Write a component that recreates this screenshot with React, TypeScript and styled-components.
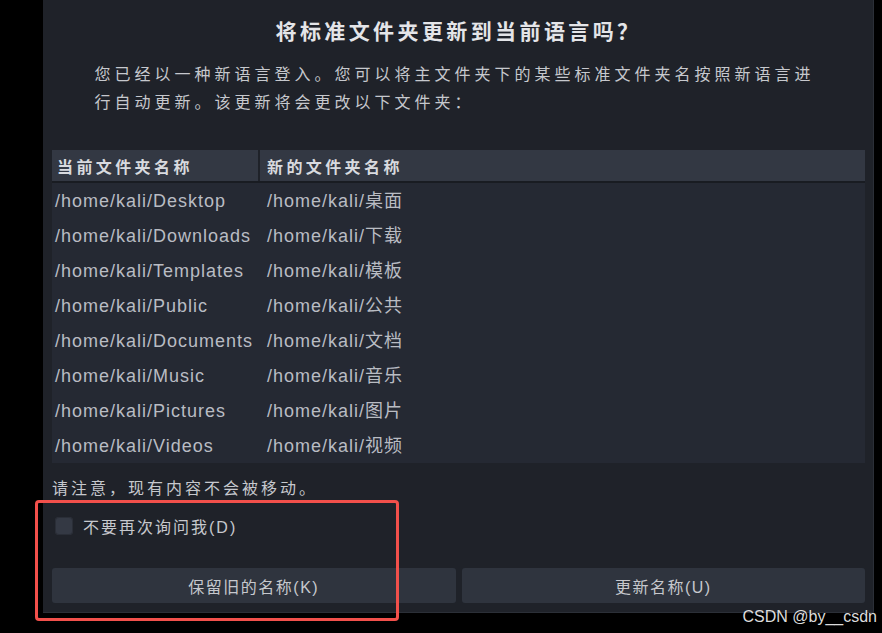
import React from 'react'
import styled, { createGlobalStyle } from 'styled-components'

const GlobalStyle = createGlobalStyle`
  html, body {
    margin: 0;
    padding: 0;
    background: #000;
  }
  body {
    font-family: "Liberation Sans", "Noto Sans CJK SC", sans-serif;
  }
`

const folders = [
  ['/home/kali/Desktop', '/home/kali/桌面'],
  ['/home/kali/Downloads', '/home/kali/下载'],
  ['/home/kali/Templates', '/home/kali/模板'],
  ['/home/kali/Public', '/home/kali/公共'],
  ['/home/kali/Documents', '/home/kali/文档'],
  ['/home/kali/Music', '/home/kali/音乐'],
  ['/home/kali/Pictures', '/home/kali/图片'],
  ['/home/kali/Videos', '/home/kali/视频'],
]

const App = () => {
  return (
    <>
      <GlobalStyle />
      <Screen>
        <Dialog>
          <Title>将标准文件夹更新到当前语言吗？</Title>
          <Intro>
            您已经以一种新语言登入。您可以将主文件夹下的某些标准文件夹名按照新语言进行自动更新。该更新将会更改以下文件夹：
          </Intro>

          <Table>
            <HeaderRow>
              <HeaderCell $first>当前文件夹名称</HeaderCell>
              <HeaderCell>新的文件夹名称</HeaderCell>
            </HeaderRow>
            <Body>
              {folders.map(([oldName, newName]) => (
                <Row key={oldName}>
                  <Cell $first>{oldName}</Cell>
                  <Cell>{newName}</Cell>
                </Row>
              ))}
            </Body>
          </Table>

          <Note>请注意，现有内容不会被移动。</Note>

          <CheckRow>
            <CheckBox />
            <CheckLabel>不要再次询问我(D)</CheckLabel>
          </CheckRow>

          <Buttons>
            <Button>保留旧的名称(K)</Button>
            <Button>更新名称(U)</Button>
          </Buttons>
        </Dialog>

        {/* red highlight drawn over the screenshot */}
        <Highlight />
        <Watermark>CSDN @by__csdn</Watermark>
      </Screen>
    </>
  )
}

const Screen = styled.div`
  position: relative;
  width: 882px;
  height: 633px;
  background: #000;
  overflow: hidden;
  padding-left: 43px;
  box-sizing: border-box;
`

const Dialog = styled.div`
  width: 831px;
  height: 613px;
  box-sizing: border-box;
  background: #1f2229;
  border-right: 1px solid #2b2f37;
  border-bottom: 1px solid #2b2f37;
  padding: 15px 8px 0 9px;
  display: flex;
  flex-direction: column;
`

const Title = styled.h1`
  margin: 0;
  font-family: "Noto Sans CJK SC", sans-serif;
  font-size: 21px;
  line-height: 30px;
  font-weight: 700;
  letter-spacing: 3.4px;
  text-align: center;
  color: #e4e5e8;
`

const Intro = styled.p`
  margin: 14px auto 0;
  width: 728px;
  font-family: "Noto Sans CJK SC", sans-serif;
  font-size: 16px;
  line-height: 28px;
  letter-spacing: 4px;
  color: #c6c8cd;
`

const Table = styled.div`
  margin-top: 35px;
  display: flex;
  flex-direction: column;
  background: #252933;
`

const HeaderRow = styled.div`
  display: grid;
  grid-template-columns: 208px 1fr;
  height: 31px;
  background: #333843;
  border-bottom: 2px solid #191c22;
`

const HeaderCell = styled.div<{ $first?: boolean }>`
  display: flex;
  align-items: center;
  padding-left: ${(p) => (p.$first ? '5px' : '7px')};
  border-right: ${(p) => (p.$first ? '2px solid #1f2229' : 'none')};
  font-family: "Noto Sans CJK SC", sans-serif;
  font-size: 16px;
  font-weight: 700;
  letter-spacing: 3.4px;
  color: #d8dadf;
`

const Body = styled.div`
  display: flex;
  flex-direction: column;
`

const Row = styled.div`
  display: grid;
  grid-template-columns: 210px 1fr;
  height: 35px;
  align-items: center;
`

const Cell = styled.div<{ $first?: boolean }>`
  padding-left: ${(p) => (p.$first ? '3px' : '5px')};
  font-family: "Liberation Sans", "Noto Sans CJK SC", sans-serif;
  font-size: 18px;
  line-height: 22px;
  letter-spacing: 1px;
  color: #b9bcc3;
  white-space: nowrap;
`

const Note = styled.div`
  margin-top: 13px;
  font-family: "Noto Sans CJK SC", sans-serif;
  font-size: 16px;
  line-height: 22px;
  letter-spacing: 3px;
  color: #c6c8cd;
`

const CheckRow = styled.div`
  margin-top: 16px;
  display: flex;
  align-items: center;
  gap: 10px;
  padding-left: 3px;
`

const CheckBox = styled.span`
  width: 18px;
  height: 18px;
  border-radius: 4px;
  background: #343944;
  box-shadow: inset 0 0 0 1px #2a2e37;
`

const CheckLabel = styled.span`
  font-family: "Liberation Sans", "Noto Sans CJK SC", sans-serif;
  font-size: 16px;
  letter-spacing: 2px;
  color: #c6c8cd;
`

const Buttons = styled.div`
  margin-top: 30px;
  display: grid;
  grid-template-columns: 1fr 1fr;
  gap: 6px;
`

const Button = styled.button`
  height: 35px;
  border: none;
  border-radius: 3px;
  background: #2f343e;
  color: #c6c8cd;
  font-family: "Liberation Sans", "Noto Sans CJK SC", sans-serif;
  font-size: 16px;
  letter-spacing: 1.5px;
  cursor: pointer;
`

const Highlight = styled.div`
  position: absolute;
  left: 35px;
  top: 500px;
  width: 364px;
  height: 121px;
  box-sizing: border-box;
  border: 3px solid #f2504b;
  border-radius: 4px;
  pointer-events: none;
`

const Watermark = styled.div`
  position: absolute;
  right: 5px;
  bottom: 7px;
  font-family: "Liberation Sans", sans-serif;
  font-size: 16px;
  color: #dcdcdc;
`

export default App
